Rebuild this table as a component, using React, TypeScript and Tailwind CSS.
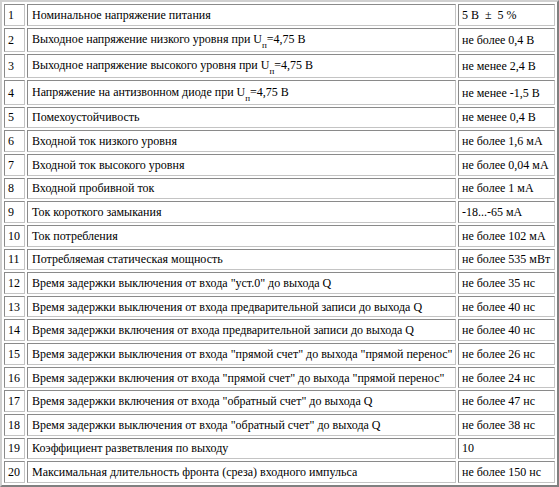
import React from "react";

type Row = { n: number; name: React.ReactNode; value: React.ReactNode };

const U = (
  <>
    U<sub className="text-[9px] align-[-3px] leading-none">п</sub>
  </>
);

const rows: Row[] = [
  { n: 1, name: "Номинальное напряжение питания", value: <>5 В &nbsp;±&nbsp; 5 %</> },
  { n: 2, name: <>Выходное напряжение низкого уровня при {U}=4,75 В</>, value: "не более 0,4 В" },
  { n: 3, name: <>Выходное напряжение высокого уровня при {U}=4,75 В</>, value: "не менее 2,4 В" },
  { n: 4, name: <>Напряжение на антизвонном диоде при {U}=4,75 В</>, value: "не менее -1,5 В" },
  { n: 5, name: "Помехоустойчивость", value: "не менее 0,4 В" },
  { n: 6, name: "Входной ток низкого уровня", value: "не более 1,6 мА" },
  { n: 7, name: "Входной ток высокого уровня", value: "не более 0,04 мА" },
  { n: 8, name: "Входной пробивной ток", value: "не более 1 мА" },
  { n: 9, name: "Ток короткого замыкания", value: "-18...-65 мА" },
  { n: 10, name: "Ток потребления", value: "не более 102 мА" },
  { n: 11, name: "Потребляемая статическая мощность", value: "не более 535 мВт" },
  { n: 12, name: "Время задержки выключения от входа \"уст.0\" до выхода Q", value: "не более 35 нс" },
  { n: 13, name: "Время задержки выключения от входа предварительной записи до выхода Q", value: "не более 40 нс" },
  { n: 14, name: "Время задержки включения от входа предварительной записи до выхода Q", value: "не более 40 нс" },
  { n: 15, name: "Время задержки выключения от входа \"прямой счет\" до выхода \"прямой перенос\"", value: "не более 26 нс" },
  { n: 16, name: "Время задержки включения от входа \"прямой счет\" до выхода \"прямой перенос\"", value: "не более 24 нс" },
  { n: 17, name: "Время задержки включения от входа \"обратный счет\" до выхода Q", value: "не более 47 нс" },
  { n: 18, name: "Время задержки выключения от входа \"обратный счет\" до выхода Q", value: "не более 38 нс" },
  { n: 19, name: "Коэффициент разветвления по выходу", value: "10" },
  { n: 20, name: "Максимальная длительность фронта (среза) входного импульса", value: "не более 150 нс" },
];

const cell =
  "border border-t-[#8a8a8a] border-l-[#8a8a8a] border-b-[#c4c4c4] border-r-[#c4c4c4] py-0 align-middle whitespace-nowrap overflow-hidden font-['Liberation_Serif','Times_New_Roman',serif]";

export default function App() {
  return (
    <div className="w-[559px] h-[487px] bg-white overflow-hidden font-['Liberation_Serif','Times_New_Roman',serif]">
      <table className="table-fixed w-[559px] h-[487px] border-separate border-spacing-[2px] border-2 border-t-[#d0d0d0] border-l-[#d0d0d0] border-b-[#808080] border-r-[#808080] text-[12px] leading-[14px] text-black">
        <colgroup>
          <col className="w-[21px]" />
          <col />
          <col className="w-[97px]" />
        </colgroup>
        <tbody>
          {rows.map((r) => (
            <tr key={r.n}>
              <td className={`${cell} px-[3px]`}>{r.n}</td>
              <td className={`${cell} pl-[4px] pr-[2px]`}>{r.name}</td>
              <td className={`${cell} pl-[3px] pr-[1px]`}>{r.value}</td>
            </tr>
          ))}
        </tbody>
      </table>
    </div>
  );
}
